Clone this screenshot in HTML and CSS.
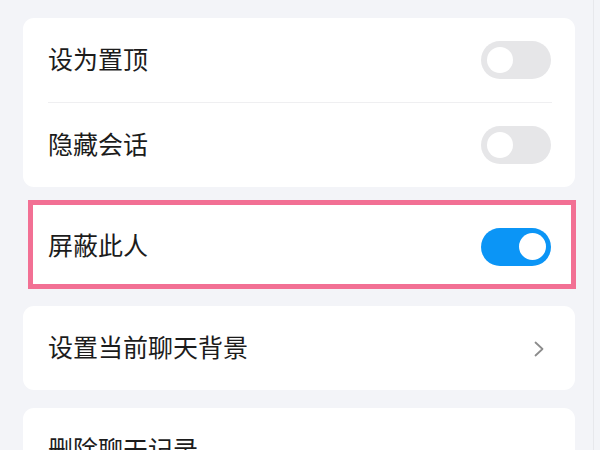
FILE: index.html
```html
<!DOCTYPE html>
<html lang="zh-CN">
<head>
<meta charset="utf-8">
<title>聊天设置</title>
<link rel="stylesheet" href="styles.css">
</head>
<body>
<div class="page">
  <section class="card card-first">
    <div class="row">
      <span class="label">设为置顶</span>
      <span class="toggle"><span class="knob"></span></span>
    </div>
    <div class="divider"></div>
    <div class="row">
      <span class="label">隐藏会话</span>
      <span class="toggle"><span class="knob"></span></span>
    </div>
  </section>

  <section class="card card-highlight">
    <div class="row row-highlight">
      <span class="label">屏蔽此人</span>
      <span class="toggle toggle-on"><span class="knob"></span></span>
    </div>
  </section>

  <section class="card">
    <div class="row row-link">
      <span class="label">设置当前聊天背景</span>
      <svg class="chevron" width="10" height="16" viewBox="0 0 10 16" aria-hidden="true">
        <polyline points="1.5,1.5 8.5,8 1.5,14.5" fill="none" stroke="#8c8c8c" stroke-width="1.8" stroke-linecap="round" stroke-linejoin="round"/>
      </svg>
    </div>
  </section>

  <section class="card card-last">
    <div class="row">
      <span class="label">删除聊天记录</span>
    </div>
  </section>
</div>
</body>
</html>
```

FILE: styles.css
```css
html, body {
  margin: 0;
  padding: 0;
  background: #f3f4f8;
  height: 100%;
  overflow: hidden;
}

.page {
  width: 594px;
  height: 450px;
  border-right: 1px solid #e7e8ec;
  box-sizing: border-box;
  padding: 18px 0 0 23px;
  display: flex;
  flex-direction: column;
  font-family: "Noto Sans CJK SC", "Noto Sans", sans-serif;
  color: #1c1c1c;
}

.card {
  width: 552px;
  background: #ffffff;
  border-radius: 11px;
  flex-shrink: 0;
}

.card + .card {
  margin-top: 17px;
}

.card-first + .card {
  margin-top: 13px;
}

.card-last {
  margin-top: 18px !important;
  height: 84px;
}

.row {
  height: 84px;
  display: flex;
  align-items: center;
  justify-content: space-between;
  padding: 0 24px 0 25px;
  box-sizing: border-box;
}

.label {
  font-size: 25px;
  line-height: 1;
  letter-spacing: 0;
  padding-bottom: 4px;
}

.divider {
  height: 1px;
  background: #efeff1;
  margin: 0 23px 0 25px;
}

.card-highlight {
  width: 548px;
  margin-left: 5px;
  border: 5px solid #f27094;
  border-radius: 0;
  box-sizing: border-box;
  height: 89px;
}

.row-highlight {
  height: 79px;
  padding: 4px 20px 0 15px;
}

.row-link {
  padding-right: 31px;
}

.row-link .chevron {
  margin-top: 2px;
}

.toggle {
  width: 70px;
  height: 38px;
  border-radius: 19px;
  background: #e6e6e8;
  display: flex;
  align-items: center;
  padding: 0 6px;
  box-sizing: border-box;
}

.knob {
  width: 26px;
  height: 26px;
  border-radius: 50%;
  background: #ffffff;
}

.toggle-on {
  background: #0b95f6;
  justify-content: flex-end;
  padding: 0 5px;
}

.toggle-on .knob {
  width: 27px;
  height: 27px;
}
```
